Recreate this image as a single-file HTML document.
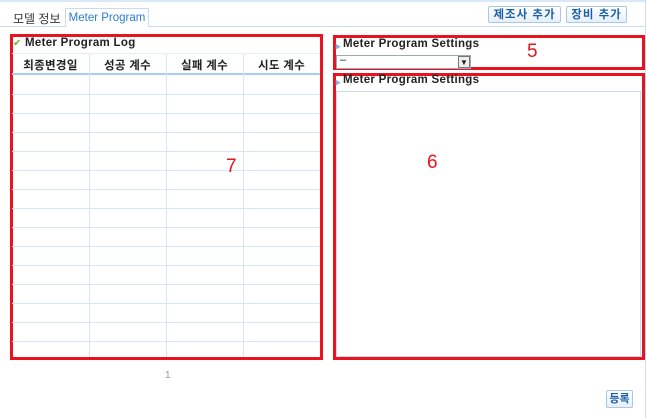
<!DOCTYPE html>
<html><head><meta charset="utf-8"><style>
*{margin:0;padding:0;box-sizing:border-box}
body{width:646px;height:418px;background:#fff;position:relative;overflow:hidden;font-family:"Liberation Sans","Noto Sans CJK KR",sans-serif;font-size:12px;color:#222}
.a{position:absolute}
.red{position:absolute;border:3px solid #e8131f}
.hb{font-weight:bold;font-size:11.5px;letter-spacing:.3px}
.btn{position:absolute;border:1px solid #a9c8e6;border-radius:2px;background:linear-gradient(#fff,#e6f0fa);color:#1c5fa8;font-weight:bold;font-size:11.5px;text-align:center;line-height:16px;letter-spacing:1px}
.vl{position:absolute;width:1px;background:#d6e6f6}
.hl{position:absolute;height:1px;background:#d6e6f6;left:12px;width:308px}
</style></head><body>
<div class="a" style="left:0;top:0;width:646px;height:2px;background:#d8e8f6"></div>
<div class="a" style="left:0;top:26px;width:646px;height:1px;background:#c7dcef"></div>
<div class="a" style="left:645px;top:0;width:1px;height:418px;background:#c7dcef"></div>
<div class="a" style="left:13px;top:10px;font-size:12px;color:#333">모델 정보</div>
<div class="a" style="left:65px;top:8px;width:84px;height:19px;border:1px solid #c7dcef;border-bottom:none;background:#fff;color:#2a7fd0;font-size:11.5px;line-height:18px;text-align:center">Meter Program</div>
<div class="btn" style="left:488px;top:6px;width:73px;height:17px">제조사 추가</div>
<div class="btn" style="left:566px;top:6px;width:61px;height:17px">장비 추가</div>

<div class="red" style="left:10px;top:34px;width:313px;height:326px"></div>
<div class="a" style="left:13px;top:38px;color:#6bb82a;font-size:10px">✔</div>
<div class="a hb" style="left:25px;top:37px">Meter Program Log</div>
<div class="a" style="left:12px;top:53px;width:308px;height:1px;background:#e6eef6"></div>
<div class="a hb" style="left:12px;top:57px;width:77px;text-align:center">최종변경일</div>
<div class="a hb" style="left:89px;top:57px;width:77px;text-align:center">성공 계수</div>
<div class="a hb" style="left:166px;top:57px;width:77px;text-align:center">실패 계수</div>
<div class="a hb" style="left:243px;top:57px;width:77px;text-align:center">시도 계수</div>
<div class="a" style="left:12px;top:73px;width:308px;height:2px;background:#a9cdee"></div>
<div class="vl" style="left:89px;top:54px;height:303px"></div>
<div class="vl" style="left:166px;top:54px;height:303px"></div>
<div class="vl" style="left:243px;top:54px;height:303px"></div>
<div class="hl" style="top:94px"></div><div class="hl" style="top:113px"></div><div class="hl" style="top:132px"></div>
<div class="hl" style="top:151px"></div><div class="hl" style="top:170px"></div><div class="hl" style="top:189px"></div>
<div class="hl" style="top:208px"></div><div class="hl" style="top:227px"></div><div class="hl" style="top:246px"></div>
<div class="hl" style="top:265px"></div><div class="hl" style="top:284px"></div><div class="hl" style="top:303px"></div>
<div class="hl" style="top:322px"></div><div class="hl" style="top:341px"></div>
<div class="a" style="left:226px;top:156px;color:#e8131f;font-size:19px">7</div>

<div class="red" style="left:333px;top:35px;width:312px;height:35px"></div>
<div class="a" style="left:335px;top:42px;color:#7ab0e6;font-size:6px">▶</div>
<div class="a hb" style="left:343px;top:38px">Meter Program Settings</div>
<div class="a" style="left:336px;top:55px;width:135px;height:14px;border:1px solid #9ab;background:#fff"></div>
<div class="a" style="left:340px;top:54px;font-size:11px">–</div>
<div class="a" style="left:458px;top:56px;width:12px;height:12px;border:1px solid #777;background:#eee;font-size:8px;line-height:12px;text-align:center">▼</div>
<div class="a" style="left:527px;top:41px;color:#e8131f;font-size:19px">5</div>

<div class="red" style="left:333px;top:73px;width:312px;height:287px"></div>
<div class="a" style="left:335px;top:78px;color:#7ab0e6;font-size:6px">▶</div>
<div class="a hb" style="left:343px;top:74px">Meter Program Settings</div>
<div class="a" style="left:336px;top:91px;width:305px;height:266px;border:1px solid #c7dcef"></div>
<div class="a" style="left:427px;top:152px;color:#e8131f;font-size:19px">6</div>

<div class="a" style="left:165px;top:370px;color:#999;font-size:10px">1</div>
<div class="btn" style="left:606px;top:390px;width:27px;height:18px;line-height:16px;letter-spacing:0;font-size:11px">등록</div>
</body></html>
